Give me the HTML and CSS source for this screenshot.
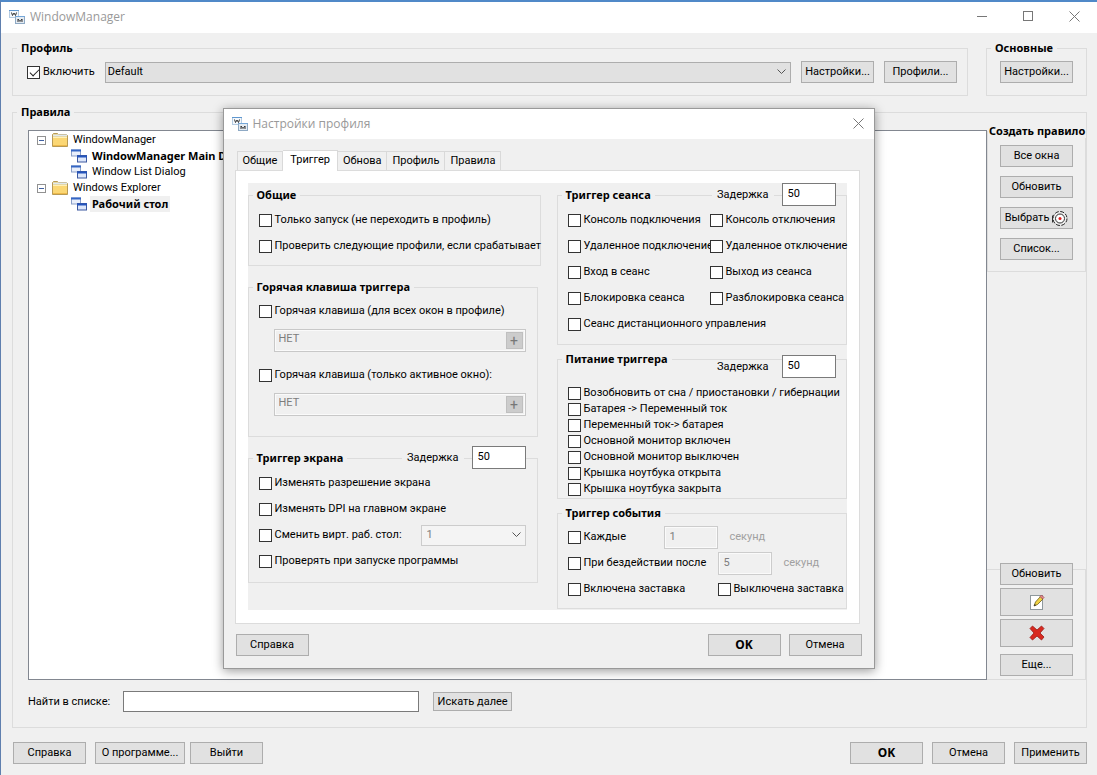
FILE: index.html
```html
<!doctype html>
<html lang="ru">
  <head>
    <meta charset="UTF-8" />
    <meta name="viewport" content="width=device-width, initial-scale=1.0" />
    <title>WindowManager</title>
    <link rel="stylesheet" href="styles.css">
  </head>

  <body>
    <!-- Shared icons -->
    <svg class="sprite" aria-hidden="true">
      <symbol id="icon-app" viewBox="0 0 16 14">
        <rect x="0.5" y="0.5" width="9" height="7" fill="#f4f8fc" stroke="#b4cbe2" />
        <path d="M0 0.500h10" stroke="#5f97cf" />
        <path d="M2.500 2.500l1 3 1.500-2.500 1.500 2.500 1-3" fill="none" stroke="#333" />
        <rect x="6.500" y="6.500" width="9" height="7" fill="#e4ebf2" stroke="#8ea9c4" />
        <path d="M6 6.500h10" stroke="#75a7d9" />
        <path d="M9 12V9l2 2.500L13 9v3" fill="none" stroke="#333" />
      </symbol>
      <symbol id="icon-folder" viewBox="0 0 16 14">
        <path d="M0.500 13.500V1.500l1-1h4l1 1h8l1 1v11z" fill="#e9c765" stroke="#b79a55" />
        <path d="M1 2.500h14" stroke="#dfe8ee" stroke-width="2" />
        <path d="M1 5h14v8H1z" fill="#fbd774" />
        <path d="M1 4.500h14" stroke="#fff0b8" />
        <path d="M1 12.500h14" stroke="#edb94a" />
      </symbol>
      <symbol id="icon-windows" viewBox="0 0 16 14">
        <rect x="0.500" y="1" width="9" height="6" fill="#e9effb" stroke="#8a9fc8" />
        <path d="M0 1.500h10" stroke="#3566c4" stroke-width="2" />
        <rect x="6.500" y="6.500" width="9" height="6.500" fill="#dce6fa" stroke="#3c59a0" />
        <path d="M6 7.500h10" stroke="#2454bd" stroke-width="2" />
      </symbol>
      <symbol id="icon-close" viewBox="0 0 11 11">
        <path d="M0.500 0.500l10 10M10.500 0.500l-10 10" stroke="#777" fill="none" />
      </symbol>
    </svg>

    <main class="window">
      <header class="titlebar">
        <svg class="app-icon"><use href="#icon-app" /></svg>
        <h1 class="title">WindowManager</h1>
        <div class="window-controls">
          <button class="caption-button" aria-label="Свернуть">
            <svg width="11" height="11"><path d="M0 5.500h10" stroke="#777" /></svg>
          </button>
          <button class="caption-button" aria-label="Развернуть">
            <svg width="11" height="11"><rect x="0.500" y="0.500" width="9" height="9" fill="none" stroke="#777" /></svg>
          </button>
          <button class="caption-button" aria-label="Закрыть">
            <svg width="11" height="11"><use href="#icon-close" /></svg>
          </button>
        </div>
      </header>

      <!-- Profile -->
      <div class="top-row">
        <fieldset class="group profile-group">
          <legend>Профиль</legend>
          <div class="profile-row">
            <label class="check"><input type="checkbox" checked />Включить</label>
            <select class="combo profile-select" aria-label="Профиль">
              <option>Default</option>
            </select>
            <button class="button">Настройки...</button>
            <button class="button">Профили...</button>
          </div>
        </fieldset>
        <fieldset class="group main-group">
          <legend>Основные</legend>
          <button class="button">Настройки...</button>
        </fieldset>
      </div>

      <!-- Rules -->
      <fieldset class="group rules-group">
        <legend>Правила</legend>
        <div class="rules-body">
          <ul class="tree">
            <li>
              <div class="tree-row">
                <span class="expander"></span>
                <svg class="tree-icon"><use href="#icon-folder" /></svg>WindowManager
              </div>
              <ul>
                <li class="tree-row strong">
                  <svg class="tree-icon"><use href="#icon-windows" /></svg><span>WindowManager Main Dialog</span>
                </li>
                <li class="tree-row">
                  <svg class="tree-icon"><use href="#icon-windows" /></svg><span>Window List Dialog</span>
                </li>
              </ul>
            </li>
            <li>
              <div class="tree-row">
                <span class="expander"></span>
                <svg class="tree-icon"><use href="#icon-folder" /></svg>Windows Explorer
              </div>
              <ul>
                <li class="tree-row strong">
                  <svg class="tree-icon"><use href="#icon-windows" /></svg><span class="selected">Рабочий стол</span>
                </li>
              </ul>
            </li>
          </ul>

          <div class="side">
            <fieldset class="group create-group">
              <legend>Создать правило</legend>
              <button class="button">Все окна</button>
              <button class="button">Обновить</button>
              <button class="button pick-button">
                Выбрать
                <svg width="17" height="17" viewBox="0 0 17 17">
                  <path d="M1.500 5.500v7" stroke="#333" />
                  <circle cx="9" cy="8.500" r="7" fill="#eee" stroke="#222" stroke-dasharray="4 1.500" />
                  <circle cx="9" cy="8.500" r="4.500" fill="#fff" stroke="#333" />
                  <circle cx="9" cy="8.500" r="1.500" fill="#e02020" />
                </svg>
              </button>
              <button class="button">Список...</button>
            </fieldset>

            <div class="edit-group">
              <button class="button">Обновить</button>
              <button class="button icon-button" aria-label="Изменить">
                <svg width="16" height="16" viewBox="0 0 16 16">
                  <rect x="1.500" y="1.500" width="12" height="14" fill="#fff" stroke="#8e989c" />
                  <path d="M5 12l1.500-4 5-5.500 2.500 2.500-5.500 5.500z" fill="#f0d242" stroke="#6b5d1c" stroke-width="0.800" />
                  <path d="M11 2.500l1.500-1.500 2.500 2.500-1.500 1.500z" fill="#e58c92" stroke="#a04b50" stroke-width="0.800" />
                  <path d="M5 12l0.800-2 1.200 1.200z" fill="#222" />
                </svg>
              </button>
              <button class="button icon-button" aria-label="Удалить">
                <svg width="16" height="16" viewBox="0 0 16 16">
                  <path d="M1 3.500L3.500 1 8 5l4.500-4L15 3.500 11 8l4 4-2.500 3L8 11l-4.500 4L1 12.500 5 8z" fill="#d82a20" stroke="#981c18" stroke-width="0.800" />
                </svg>
              </button>
              <button class="button more-button">Еще...</button>
            </div>
          </div>
        </div>

        <div class="search">
          <label for="find">Найти в списке:</label>
          <input type="text" id="find" class="search-input" />
          <button class="button search-button">Искать далее</button>
        </div>
      </fieldset>

      <footer class="footer">
        <button class="button">Справка</button>
        <button class="button about-button">О программе...</button>
        <button class="button exit-button">Выйти</button>
        <button class="button primary push">OK</button>
        <button class="button">Отмена</button>
        <button class="button">Применить</button>
      </footer>
    </main>

    <!-- Profile settings dialog -->
    <section class="dialog" role="dialog" aria-labelledby="dialog-title">
      <header class="titlebar dialog-titlebar">
        <svg class="app-icon"><use href="#icon-app" /></svg>
        <h2 class="title" id="dialog-title">Настройки профиля</h2>
        <div class="window-controls">
          <button class="caption-button" aria-label="Закрыть">
            <svg width="11" height="11"><use href="#icon-close" /></svg>
          </button>
        </div>
      </header>

      <nav class="tabs" role="tablist">
        <button class="tab" role="tab">Общие</button>
        <button class="tab active" role="tab" aria-selected="true">Триггер</button>
        <button class="tab" role="tab">Обнова</button>
        <button class="tab" role="tab">Профиль</button>
        <button class="tab" role="tab">Правила</button>
      </nav>

      <div class="tab-panel" role="tabpanel">
        <div class="triggers">
          <div class="column">
            <fieldset class="group trigger general-trigger">
              <legend>Общие</legend>
              <div class="row"><label class="check"><input type="checkbox" />Только запуск (не переходить в профиль)</label></div>
              <div class="row"><label class="check"><input type="checkbox" />Проверить следующие профили, если срабатывает</label></div>
            </fieldset>

            <fieldset class="group trigger hotkey-trigger">
              <legend>Горячая клавиша триггера</legend>
              <div class="row"><label class="check"><input type="checkbox" />Горячая клавиша (для всех окон в профиле)</label></div>
              <div class="hotkey">
                <input type="text" value="НЕТ" aria-label="Клавиша для всех окон" disabled />
                <button disabled>+</button>
              </div>
              <div class="row"><label class="check"><input type="checkbox" />Горячая клавиша (только активное окно):</label></div>
              <div class="hotkey">
                <input type="text" value="НЕТ" aria-label="Клавиша для активного окна" disabled />
                <button disabled>+</button>
              </div>
            </fieldset>

            <fieldset class="group trigger screen-trigger">
              <legend>Триггер экрана</legend>
              <div class="delay">
                <label for="delay-screen">Задержка</label>
                <input type="text" class="number" id="delay-screen" value="50" />
              </div>
              <div class="row"><label class="check"><input type="checkbox" />Изменять разрешение экрана</label></div>
              <div class="row"><label class="check"><input type="checkbox" />Изменять DPI на главном экране</label></div>
              <div class="row">
                <label class="check"><input type="checkbox" />Сменить вирт. раб. стол:</label>
                <select class="combo desktop-select" aria-label="Рабочий стол" disabled>
                  <option>1</option>
                </select>
              </div>
              <div class="row"><label class="check"><input type="checkbox" />Проверять при запуске программы</label></div>
            </fieldset>
          </div>

          <div class="column right-column">
            <fieldset class="group trigger session-trigger">
              <legend>Триггер сеанса</legend>
              <div class="delay">
                <label for="delay-session">Задержка</label>
                <input type="text" class="number" id="delay-session" value="50" />
              </div>
              <div class="session-grid">
                <label class="check"><input type="checkbox" />Консоль подключения</label>
                <label class="check"><input type="checkbox" />Консоль отключения</label>
                <label class="check"><input type="checkbox" />Удаленное подключение</label>
                <label class="check"><input type="checkbox" />Удаленное отключение</label>
                <label class="check"><input type="checkbox" />Вход в сеанс</label>
                <label class="check"><input type="checkbox" />Выход из сеанса</label>
                <label class="check"><input type="checkbox" />Блокировка сеанса</label>
                <label class="check"><input type="checkbox" />Разблокировка сеанса</label>
                <label class="check wide"><input type="checkbox" />Сеанс дистанционного управления</label>
              </div>
            </fieldset>

            <fieldset class="group trigger power-trigger">
              <legend>Питание триггера</legend>
              <div class="delay">
                <label for="delay-power">Задержка</label>
                <input type="text" class="number" id="delay-power" value="50" />
              </div>
              <label class="check"><input type="checkbox" />Возобновить от сна / приостановки / гибернации</label>
              <label class="check"><input type="checkbox" />Батарея -&gt; Переменный ток</label>
              <label class="check"><input type="checkbox" />Переменный ток-&gt; батарея</label>
              <label class="check"><input type="checkbox" />Основной монитор включен</label>
              <label class="check"><input type="checkbox" />Основной монитор выключен</label>
              <label class="check"><input type="checkbox" />Крышка ноутбука открыта</label>
              <label class="check"><input type="checkbox" />Крышка ноутбука закрыта</label>
            </fieldset>

            <fieldset class="group trigger event-trigger">
              <legend>Триггер события</legend>
              <div class="row">
                <label class="check every"><input type="checkbox" />Каждые</label>
                <input type="text" class="number" value="1" aria-label="Период" disabled />
                <span class="unit">секунд</span>
              </div>
              <div class="row">
                <label class="check idle"><input type="checkbox" />При бездействии после</label>
                <input type="text" class="number" value="5" aria-label="Бездействие" disabled />
                <span class="unit">секунд</span>
              </div>
              <div class="row">
                <label class="check saver"><input type="checkbox" />Включена заставка</label>
                <label class="check"><input type="checkbox" />Выключена заставка</label>
              </div>
            </fieldset>
          </div>
        </div>
      </div>

      <footer class="footer dialog-footer">
        <button class="button">Справка</button>
        <button class="button primary push">OK</button>
        <button class="button">Отмена</button>
      </footer>
    </section>
  </body>
</html>
```

FILE: styles.css
```css
* {
  box-sizing: border-box;
}

body {
  margin: 0;
  position: relative;
  background: #f0f0f0;
  color: #000;
  font: 11px/14px Roboto, Tahoma, sans-serif;
}

button,
input,
select {
  font: inherit;
  color: inherit;
  margin: 0;
}

ul {
  list-style: none;
  margin: 0;
  padding: 0;
}

.sprite {
  display: none;
}

.window {
  display: flex;
  flex-direction: column;
  min-height: 100vh;
  border-top: 2px solid #5089c8;
  border-left: 1px solid #5f7fae;
}

/* title bars */
.titlebar {
  display: flex;
  align-items: center;
  height: 31px;
  padding: 0 0 2px 8px;
  background: #fff;
}

.app-icon {
  width: 16px;
  height: 14px;
}

.title {
  margin: 0 0 0 5px;
  font: 12px/16px "Open Sans", "Segoe UI", sans-serif;
  color: #999;
}

.window-controls {
  display: flex;
  margin-left: auto;
}

.caption-button {
  display: flex;
  align-items: center;
  justify-content: center;
  width: 46px;
  height: 28px;
  padding: 0;
  border: 0;
  background: none;
}

/* group boxes */
.group {
  position: relative;
  min-width: 0;
  margin: 0;
  padding: 0;
  border: 1px solid #dcdcdc;
}

.group > legend {
  height: 14px;
  padding: 0 4px;
  font-family: "Noto Sans", "Segoe UI", sans-serif;
  font-weight: bold;
  white-space: nowrap;
}

.button {
  flex: none;
  width: 73px;
  height: 22px;
  padding: 0;
  border: 1px solid #adadad;
  background: #e1e1e1;
  text-align: center;
  white-space: nowrap;
}

.primary {
  font-family: "Noto Sans", "Segoe UI", sans-serif;
  font-size: 12px;
  font-weight: bold;
}

.push {
  margin-left: auto;
}

.check {
  display: flex;
  align-items: center;
  gap: 3px;
  white-space: nowrap;
}

.check input {
  appearance: none;
  flex: none;
  width: 13px;
  height: 13px;
  border: 1px solid #333;
  background: #fff;
}

.check input:checked::after {
  content: "";
  display: block;
  width: 8px;
  height: 4px;
  margin: 2px 0 0 2px;
  border-left: 1px solid #222;
  border-bottom: 1px solid #222;
  transform: rotate(-45deg);
}

.combo {
  appearance: none;
  height: 21px;
  padding: 0 2px;
  border: 1px solid #adadad;
  border-radius: 0;
  background: #e1e1e1 url("data:image/svg+xml,%3Csvg xmlns='http://www.w3.org/2000/svg' width='9' height='6'%3E%3Cpath d='M.5 .5l4 4 4-4' fill='none' stroke='%23555'/%3E%3C/svg%3E") no-repeat right 4px center;
}

/* main window */
.top-row {
  display: flex;
  gap: 18px;
  padding: 8px 10px 9px 11px;
}

.profile-group {
  flex: 1;
  padding: 6px 10px 12px 14px;
}

.profile-group > legend {
  margin-left: -10px;
}

.profile-row {
  display: flex;
  align-items: center;
  gap: 10px;
}

.profile-select {
  flex: 1;
  color: #000;
}

.main-group {
  width: 101px;
  padding: 6px 13px 12px;
}

.main-group > legend {
  margin-left: -9px;
}

.rules-group {
  flex: 1;
  margin: 0 10px 0 11px;
  padding: 5px 0 15px 15px;
}

.rules-group > legend {
  margin-left: -11px;
}

.rules-body {
  display: flex;
  min-height: calc(100vh - 219px);
}

.tree {
  flex: 1;
  margin-top: 6px;
  padding: 1px 0 0 8px;
  border: 1px solid #828790;
  background: #fff;
}

.tree ul {
  padding-left: 34px;
}

.tree-row {
  display: flex;
  align-items: center;
  height: 16px;
  white-space: nowrap;
}

.tree-icon {
  flex: none;
  width: 16px;
  height: 14px;
  margin-right: 5px;
}

.strong {
  font-family: "Noto Sans", Tahoma, sans-serif;
  font-weight: bold;
}

.selected {
  margin-left: -2px;
  padding: 1px 2px;
  background: #f0f0f0;
}

.expander {
  display: flex;
  align-items: center;
  justify-content: center;
  width: 9px;
  height: 9px;
  margin-right: 6px;
  border: 1px solid #919191;
}

.expander::before {
  content: "";
  width: 5px;
  height: 1px;
  background: #4060a0;
}

.side {
  display: flex;
  flex-direction: column;
  justify-content: space-between;
  width: 99px;
}

.create-group {
  display: flex;
  flex-direction: column;
  gap: 9px;
  padding: 7px 12px 11px;
}

.create-group > legend {
  margin-left: -12px;
  padding: 0 1px;
}

.pick-button {
  display: flex;
  align-items: center;
  justify-content: center;
  gap: 2px;
}

.edit-group {
  display: flex;
  flex-direction: column;
  padding: 0 12px 3px 13px;
  border: 1px solid #dcdcdc;
  border-left: 0;
}

.edit-group > .button:first-child {
  margin-top: -7px;
}

.icon-button {
  display: flex;
  align-items: center;
  justify-content: center;
  height: 28px;
  margin-top: 3px;
}

.more-button {
  margin-top: 7px;
}

.search {
  display: flex;
  align-items: center;
  margin-top: 11px;
}

.search-input {
  width: 296px;
  height: 21px;
  margin: 0 14px 0 13px;
  border: 1px solid #7a7a7a;
  background: #fff;
}

.search-button {
  width: 79px;
  height: 19px;
}

.footer {
  display: flex;
  gap: 9px;
  padding: 14px 10px 11px 12px;
}

.about-button {
  width: 90px;
}

.exit-button {
  margin-left: -4px;
}

/* dialog */
.dialog {
  position: absolute;
  top: 108px;
  left: 0;
  right: 0;
  width: 652px;
  max-width: 100%;
  margin: 0 auto;
  border: 1px solid #999;
  background: #f0f0f0;
  box-shadow: 0 2px 10px rgba(0, 0, 0, 0.4);
}

.dialog-titlebar {
  height: 30px;
  padding: 0 0 1px 8px;
}

.dialog-titlebar .caption-button {
  width: 30px;
}

.tabs {
  display: flex;
  align-items: flex-end;
  padding: 11px 12px 0 13px;
}

.tab {
  height: 19px;
  padding: 0 5px;
  border: 1px solid #d9d9d9;
  border-width: 1px 1px 0 0;
  background: #f0f0f0;
}

.tab:first-child {
  border-left-width: 1px;
}

.tab.active {
  height: 21px;
  margin-bottom: -1px;
  padding: 0 7px 2px;
  border-left-width: 0;
  background: #fff;
  position: relative;
}

.tab-panel {
  margin: 0 14px 0 11px;
  padding: 12px 12px 13px;
  border: 1px solid #dcdcdc;
  background: #fff;
}

.triggers {
  display: grid;
  grid-template-columns: 1fr 1fr;
  gap: 19px;
  padding: 5px 0 1px;
  background: #f0f0f0;
}

.column {
  display: flex;
  flex-direction: column;
  gap: 14px;
  min-width: 0;
}

.right-column {
  gap: 7px;
}

.trigger {
  padding: 5px 11px 6px 10px;
}

.trigger > legend {
  margin-left: -6px;
}

.row {
  display: flex;
  align-items: center;
  height: 26px;
}

.general-trigger {
  margin-right: -3px;
}

.hotkey-trigger {
  padding-top: 4px;
  padding-bottom: 10px;
}

.screen-trigger {
  padding-bottom: 8px;
}

.session-trigger {
  padding-bottom: 7px;
}

.event-trigger {
  padding-top: 4px;
}

.hotkey {
  display: flex;
  height: 23px;
  margin: 5px 0 10px 15px;
  padding: 1px 2px;
  border: 1px solid #c8c8c8;
  outline: 1px solid #fafafa;
  outline-offset: -2px;
}

.hotkey input {
  flex: 1;
  min-width: 0;
  padding: 0 2px 3px;
  border: 0;
  background: none;
  color: #7d7d7d;
}

.hotkey button {
  width: 17px;
  margin: 1px 0;
  padding: 0;
  border: 1px solid #bfbfbf;
  background: #ccc;
  color: #777;
  font-size: 14px;
  line-height: 14px;
}

.delay {
  position: absolute;
  top: -19px;
  right: 11px;
  display: flex;
  align-items: center;
}

.right-column .delay {
  right: 10px;
}

.delay label {
  padding: 0 5px;
  margin-right: 8px;
  background: #f0f0f0;
}

.number {
  width: 54px;
  height: 23px;
  padding: 0 5px 2px;
  border: 1px solid #7a7a7a;
  background: #fff;
}

.number:disabled {
  border-color: #ccc;
  outline: 1px solid #fafafa;
  outline-offset: -2px;
  background: #f0f0f0;
  color: #7d7d7d;
}

.desktop-select {
  width: 105px;
  margin-left: auto;
  padding: 0 5px;
  border-color: #ccc;
  background-color: #f4f4f4;
  color: #7d7d7d;
  opacity: 1;
}

.session-grid {
  display: grid;
  grid-template-columns: 142px 1fr;
  grid-auto-rows: 26px;
}

.session-grid .wide {
  grid-column: span 2;
}

.power-trigger {
  padding-top: 19px;
  padding-bottom: 1px;
}

.power-trigger .delay {
  top: -11px;
}

.power-trigger .check {
  height: 16px;
}

.every {
  min-width: 96px;
}

.idle,
.saver {
  min-width: 150px;
}

.unit {
  margin-left: 12px;
  color: #a0a0a0;
}

.dialog-footer {
  gap: 8px;
  padding: 10px 12px 12px;
}
```
